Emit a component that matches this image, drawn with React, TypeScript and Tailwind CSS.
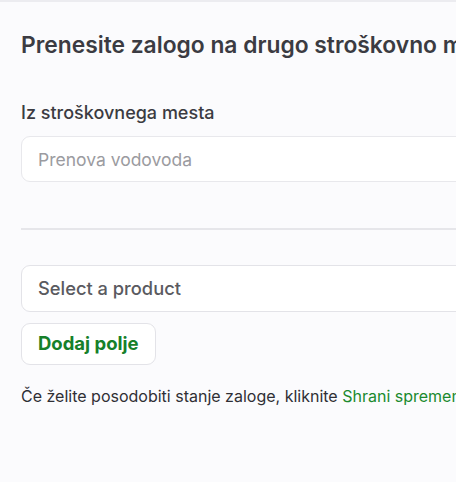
import React from 'react';

const App: React.FC = () => {
  return (
    <div
      className="h-[482px] w-[456px] overflow-hidden bg-[#fbfbfd] border-t-2 border-[#ececf0]"
      style={{ fontFamily: 'Inter, "Noto Sans", sans-serif' }}
    >
      <div className="w-[800px] pl-[21px] pt-[27px]">
        <h2 className="text-[22.8px] font-semibold leading-[32px] text-[#3b3b42]">
          Prenesite zalogo na drugo stroškovno mesto
        </h2>

        <div className="mt-[40px]">
          <label className="block text-[18px] font-medium leading-[24px] text-[#3b3b42]">
            Iz stroškovnega mesta
          </label>
          <input
            readOnly
            placeholder="Prenova vodovoda"
            className="mt-[11px] h-[46px] w-full rounded-[9px] border border-[#e8e8ec] bg-white px-[16px] text-[17.5px] text-[#3b3b42] placeholder:text-[#9b9ba0] outline-none"
          />
        </div>

        <div className="mt-[46px] h-[2px] bg-[#e6e6ea]" />

        <div className="mt-[35px] flex h-[47px] w-full items-center rounded-[9px] border border-[#e3e3e8] bg-white px-[16px] text-[18.3px] font-medium text-[#5a5a60]">
          Select a product
        </div>

        <button className="mt-[11px] h-[42px] rounded-[9px] border border-[#e3e3e8] bg-white px-[16px] text-[18.5px] font-bold text-[#16802a]">
          Dodaj polje
        </button>

        <p className="mt-[20px] text-[16px] leading-[22px] text-[#2f2f35]">
          Če želite posodobiti stanje zaloge, kliknite{' '}
          <span className="text-[#1a8a2e]">Shrani spremembe</span>.
        </p>
      </div>
    </div>
  );
};

export default App;
